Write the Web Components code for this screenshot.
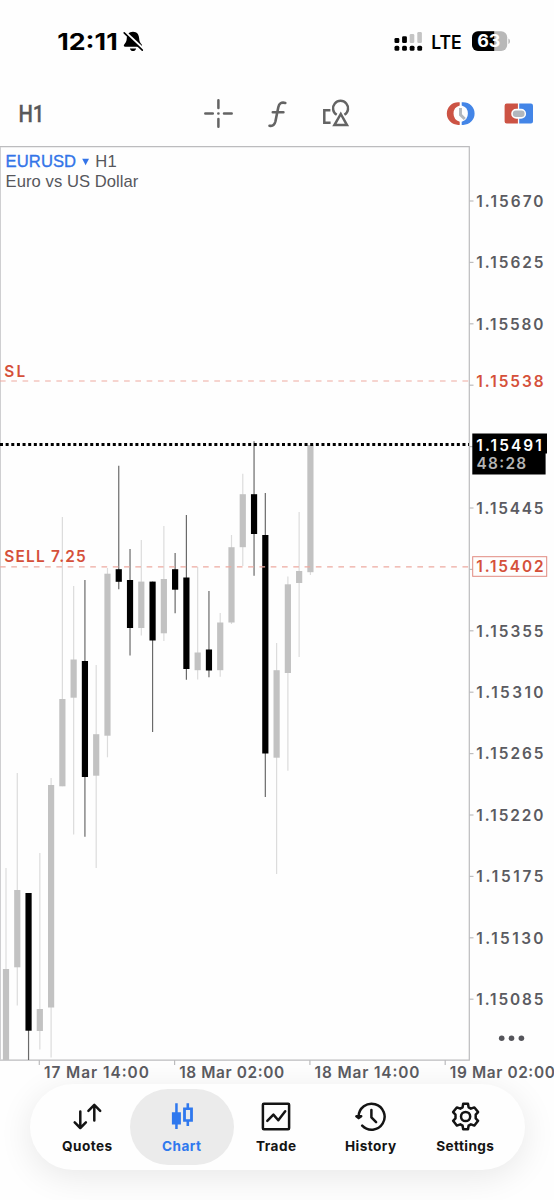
<!DOCTYPE html>
<html lang="en">
<head>
<meta charset="utf-8">
<title>EURUSD H1</title>
<style>
html, body {
    margin: 0;
    background: #fefefe;
}
body {
    width: 554px;
    height: 1200px;
    overflow: hidden;
    display: flex;
    flex-direction: column;
    font-family: Inter, "Liberation Sans", sans-serif;
}
</style>
</head>
<body>
<status-bar></status-bar>
<chart-toolbar></chart-toolbar>
<price-chart></price-chart>
<tab-bar>
    <tab-item label="Quotes">
        <svg width="30" height="30" viewBox="0 0 30 30" fill="none" stroke="#141414" stroke-width="2.5" stroke-linecap="round" stroke-linejoin="round"><path d="M8.3 9.5V25.6M2.7 20.3L8.3 26L13.9 20.3M22.3 18.6V3M16.4 8.8L22.3 2.8L28.2 8.8"/></svg>
    </tab-item>
    <tab-item label="Chart" active>
        <svg width="30" height="30" viewBox="0 0 30 30" fill="#2f78ee"><path d="M8.2 1.3h2.5v8.9h3.2v12.4h-3.2v4.4h-2.5v-4.4h-3.3v-12.4h3.3z"/><path fill-rule="evenodd" d="M19.5 1.3h2.6v4.1h3.8v14.4h-3.8v4.3h-2.6v-4.3h-3.4v-14.4h3.4zM18.9 8.1v9.2h4.2v-9.2z"/></svg>
    </tab-item>
    <tab-item label="Trade">
        <svg width="30" height="30" viewBox="0 0 30 30" fill="none" stroke="#141414" stroke-width="2.5" stroke-linejoin="round"><rect x="1.9" y="1.7" width="26.2" height="25.6" rx="1"/><path stroke-linecap="round" d="M6.3 18.8L12.4 12.6L17.3 18.3L24.2 9.2"/></svg>
    </tab-item>
    <tab-item label="History">
        <svg width="32" height="30" viewBox="0 0 32 30" fill="none" stroke="#141414" stroke-width="2.5" stroke-linecap="round" stroke-linejoin="round"><path d="M3.6 14.6A13 13 0 1 1 7.2 23.7"/><path d="M16.4 8V15.3L21.1 20.2"/><path d="M1.4 14.2H6.2L3.7 16.1z" fill="#141414"/></svg>
    </tab-item>
    <tab-item label="Settings">
        <svg width="30" height="30" viewBox="0 0 30 30" fill="none" stroke="#141414" stroke-width="2.5" stroke-linejoin="round"><path d="M13.2 1.8H18L18.6 5.4L20.9 6.7L24.4 5.4L28.1 10.1L25.7 12.7V16.3L28.1 18.8L24.4 23.6L20.9 22.3L18.6 23.6L18 27.2H13.2L12.6 23.6L10.3 22.3L6.8 23.6L3.1 18.8L5.5 16.3V12.7L3.1 10.1L6.8 5.4L10.3 6.7L12.6 5.4z"/><circle cx="15.6" cy="14.5" r="4.6"/></svg>
    </tab-item>
</tab-bar>
<script>
class BaseElement extends HTMLElement {
    connectedCallback() {
        if (!this.shadowRoot) {
            this.attachShadow({ mode: "open" });
        }
        this.shadowRoot.innerHTML = `<style>${this.css()}</style>${this.content()}`;
    }
    css() {
        return ":host { display: block; }";
    }
    content() {
        return "<slot></slot>";
    }
}

customElements.define("status-bar", class extends BaseElement {
    css() {
        return `
            :host {
                display: flex;
                justify-content: space-between;
                box-sizing: border-box;
                flex: none;
                height: 83px;
                padding: 27px 43px 0 57px;
            }
            div { display: flex; }
            svg { display: block; overflow: visible; }
        `;
    }
    content() {
        return `
            <div>
                <svg width="88" height="30" viewBox="57 27 88 30">
                    <text x="57.2" y="50" font-size="23" font-weight="700" textLength="60.5" lengthAdjust="spacingAndGlyphs">12:11</text>
                    <path d="M133 31.7C129 31.7 127 34.6 126.8 38C126.6 42 125.5 42.8 124.2 44.6C123.4 45.8 123.9 46.8 125.2 46.8H140.6C142 46.8 142.4 45.6 141.7 44.6C140.2 42.8 139.4 41.8 139.1 38C138.9 34.6 137 31.7 133 31.7zM129.9 48.5C130.5 50.3 131.5 51.1 133 51.1S135.6 50.3 136.1 48.5z"/>
                    <path d="M125 31.9L143.6 49.3" stroke="#fefefe" stroke-width="2.6"/>
                    <path d="M124.2 32.8L142.3 50.2" stroke="#000" stroke-width="1.6" stroke-linecap="round"/>
                </svg>
            </div>
            <div>
                <svg width="117" height="30" viewBox="394 27 117 30">
                    <g fill="#c4c4c4"><rect x="409.7" y="34" width="4.6" height="9" rx="1.3"/><rect x="417.3" y="32" width="4.6" height="11" rx="1.3"/></g>
                    <rect x="394.5" y="38" width="4.8" height="5" rx="1.3"/>
                    <rect x="402.1" y="36.3" width="4.8" height="6.8" rx="1.3"/>
                    <rect x="394.5" y="45.8" width="4.8" height="5" rx="1.5"/>
                    <rect x="402.1" y="45.8" width="4.8" height="5" rx="1.5"/>
                    <rect x="409.7" y="45.8" width="4.8" height="5" rx="1.5"/>
                    <rect x="417.3" y="45.8" width="4.8" height="5" rx="1.5"/>
                    <text x="431.2" y="48.5" font-size="18.5" font-weight="600" textLength="30.5" lengthAdjust="spacingAndGlyphs">LTE</text>
                    <rect x="472" y="31.3" width="35.2" height="19.8" rx="6" fill="#b8b8b8"/>
                    <path d="M478 31.3H494.2V51.1H478A6 6 0 0 1 472 45.1V37.3A6 6 0 0 1 478 31.3z"/>
                    <path d="M508.4 38.5C510.5 39.3 510.5 43.2 508.4 44z" fill="#b8b8b8"/>
                    <text x="477.2" y="47.4" font-size="17.4" font-weight="700" fill="#fff" textLength="23.2" lengthAdjust="spacingAndGlyphs">63</text>
                </svg>
            </div>
        `;
    }
});

customElements.define("chart-toolbar", class extends BaseElement {
    css() {
        return `
            :host {
                display: flex;
                align-items: center;
                box-sizing: border-box;
                flex: none;
                height: 63px;
                padding: 0 20px 3px 19px;
            }
            div { display: flex; }
            .tools { gap: 29px; margin-left: 158px; }
            .modes { gap: 27px; margin-left: auto; }
            svg { display: block; overflow: visible; }
        `;
    }
    content() {
        return `
            <svg width="26" height="30" viewBox="0 0 26 30">
                <text x="-0.6" y="23.5" font-family="Roboto, sans-serif" font-size="24.4" font-weight="500" fill="#58585a" stroke="#58585a" stroke-width="0.3" textLength="26" lengthAdjust="spacingAndGlyphs">H1</text>
            </svg>
            <div class="tools">
                <svg width="30" height="30" viewBox="0 0 30 30" fill="none" stroke="#646464" stroke-width="2.5" stroke-linecap="round">
                    <path d="M15.4 2.2V10M15.4 21V28.8M2.3 15.5H9.8M21 15.5H28.7M15.3 15.5H15.5"/>
                </svg>
                <svg width="30" height="30" viewBox="0 0 30 30" fill="none" stroke="#646464" stroke-width="2.6" stroke-linecap="round" stroke-linejoin="round">
                    <path d="M7.5 27.7C11 28.4 12.6 26.6 13.4 23.5L16.3 9.2C17.1 5.3 19.2 4 23.3 4.9M10.8 14.2H21.4"/>
                </svg>
                <svg width="30" height="30" viewBox="0 0 30 30" fill="none" stroke="#646464" stroke-width="2.5">
                    <path d="M9.4 12.3H3.3V24.7H9.6M15.7 16.8A7.5 7.5 0 1 1 23.4 16.8"/>
                    <path d="M19.8 16L26 27.1H13.4z"/>
                </svg>
            </div>
            <div class="modes">
                <svg width="31" height="30" viewBox="0 0 31 30" fill="none">
                    <path d="M13.7 4.3H12.2A11.4 11.3 0 0 0 12.2 26.9H13.7V23.7A8.4 8.4 0 0 1 13.7 7.5z" fill="#cc5344"/>
                    <path d="M15.7 4.3H17.2A11.4 11.3 0 0 1 17.2 26.9H15.7V23.7A8.4 8.4 0 0 0 15.7 7.5z" fill="#4385e7"/>
                    <path d="M14.5 10V16.8L18.8 21" stroke="#b2b7bd" stroke-width="2.9"/>
                </svg>
                <svg width="30" height="30" viewBox="0 0 30 30">
                    <path d="M2.7 5.6H13.9V10.7H12.2A5 5 0 0 0 12.2 20.7H13.9V25.6H2.7Q0.6 25.6 0.6 23.5V7.7Q0.6 5.6 2.7 5.6z" fill="#cc5344"/>
                    <path d="M15.2 5.6H26.9Q29 5.6 29 7.7V23.5Q29 25.6 26.9 25.6H15.2V20.7H17.1A5 5 0 0 0 17.1 10.7H15.2z" fill="#4385e7"/>
                    <rect x="8.8" y="12.5" width="11.8" height="6.4" rx="3.2" fill="#b2b7bd"/>
                </svg>
            </div>
        `;
    }
});

// [high, body top, body bottom, low, bearish]
const candles = [
    [868, 969, 1060, 1060, 0],
    [773, 890, 967.3, 1005.5, 0],
    [893, 893, 1030.7, 1060, 1],
    [853, 1009, 1031, 1049.5, 0],
    [778, 785, 1007.5, 1057.5, 0],
    [517, 699, 786.3, 786.3, 0],
    [586, 659.5, 697.7, 834.5, 0],
    [580, 661, 777, 836.7, 1],
    [665, 734.2, 775.7, 868, 0],
    [568, 573.7, 735.7, 757.3, 0],
    [465.7, 569.2, 581.8, 589.3, 1],
    [549, 580, 628, 655.5, 1],
    [540, 581.6, 628, 635.5, 0],
    [581.6, 581.6, 640.5, 732, 1],
    [526, 579, 633.3, 641, 0],
    [553, 569.2, 589.7, 613.2, 1],
    [515, 577.5, 669, 679.7, 1],
    [567, 652.5, 670.2, 679.5, 0],
    [591, 649.5, 670.5, 677.3, 1],
    [613, 622.5, 670.2, 676.7, 0],
    [535, 547.2, 622.5, 624, 0],
    [473.7, 494.2, 547.2, 566, 0],
    [441.3, 494.2, 534, 575.7, 1],
    [493, 535, 753.5, 797, 1],
    [643, 670.2, 757.7, 874, 0],
    [576.5, 584.3, 673, 770.7, 0],
    [512, 571, 583, 657, 0],
    [445, 445, 572.2, 575, 0]
];
const prices = [
    ["1.15670", 201], ["1.15625", 262.4], ["1.15580", 323.8], ["1.15445", 508],
    ["1.15355", 630.8], ["1.15310", 692.2], ["1.15265", 753.6], ["1.15220", 815],
    ["1.15175", 876.4], ["1.15130", 937.8], ["1.15085", 999.2]
];
const times = [
    ["17 Mar 14:00", 39.3], ["18 Mar 02:00", 174.6],
    ["18 Mar 14:00", 309.9], ["19 Mar 02:00", 445.2]
];

customElements.define("price-chart", class extends BaseElement {
    css() {
        return `
            :host { display: block; flex: none; height: 938px; }
            svg { display: block; }
            .frame, .tick { stroke: #bcbcbe; stroke-width: 1.2; fill: none; }
            .label { font-size: 15.4px; font-weight: 600; fill: #5b5b61; }
            .red { fill: #d5503a; }
            .pair { font: 16.6px "Liberation Sans", sans-serif; fill: #56575c; }
            .link { fill: #3374e8; stroke: #3374e8; stroke-width: 0.35px; }
        `;
    }
    candle([high, top, bottom, low, bearish], index) {
        let x = 6 + index * 11.275;
        let wick = bearish ? "#6a6a6a" : "#dcdcdc";
        return `
            <path d="M${x} ${high}V${low}" stroke="${wick}" stroke-width="1.2"/>
            <rect x="${x - 3.1}" y="${top}" width="6.2" height="${bottom - top}" fill="${bearish ? "#000" : "#c2c2c2"}"/>
        `;
    }
    price(text, y, name = "") {
        return `<text class="label ${name}" x="476.3" y="${y + 5.8}" textLength="67.2">${text}</text>`;
    }
    content() {
        let ticks = "";
        for (let i = 0; i < 14; i++) {
            ticks += `<path class="tick" d="M469 ${201 + i * 61.4}H473.5"/>`;
        }
        return `
            <svg width="554" height="938" viewBox="0 146 554 938">
                <path class="frame" d="M0 146.6H469.3V1060M0 1060.2H469.9"/>
                <path d="M0.5 147V1060" stroke="#cfcfd1"/>
                ${ticks}
                ${candles.map(this.candle).join("")}
                <path d="M0 381H469M0 566.8H469" stroke="#eda9a0" stroke-width="1.2" stroke-dasharray="5.64 5.64"/>
                <path d="M0 444.5H469" stroke="#000" stroke-width="2.8" stroke-dasharray="3 2.64"/>
                <text class="pair link" x="5.6" y="166.6" textLength="70.5">EURUSD</text>
                <path d="M82.2 158.7H89L85.6 165.2z" fill="#3374e8"/>
                <text class="pair" x="95.2" y="166.6" textLength="21.5">H1</text>
                <text class="pair" x="5.6" y="187.4" textLength="132.8">Euro vs US Dollar</text>
                <text class="label red" x="4.3" y="376.8" textLength="21">SL</text>
                <text class="label red" x="4.3" y="562.4" textLength="81.5">SELL 7.25</text>
                ${prices.map(([text, y]) => this.price(text, y)).join("")}
                ${this.price("1.15538", 381, "red")}
                <path d="M472.3 433.6H547V453.6H545.6V474.5H472.3z"/>
                <text class="label" x="476.3" y="450.6" textLength="65.5" style="fill: #fff">1.15491</text>
                <text class="label" x="476.6" y="469" textLength="49.5" style="fill: #b4b4b4">48:28</text>
                <rect x="472.7" y="556.7" width="74" height="19.6" fill="#fefefe" stroke="#e18a80"/>
                ${this.price("1.15402", 566.6, "red")}
                <g fill="#55555b"><circle cx="501.7" cy="1038.2" r="2.8"/><circle cx="511.5" cy="1038.2" r="2.8"/><circle cx="521.4" cy="1038.2" r="2.8"/></g>
                ${times.map(([text, x]) => `
                    <path class="tick" d="M${x} 1060V1065"/>
                    <text class="label" x="${x + 4.6}" y="1077.8" textLength="105">${text}</text>
                `).join("")}
            </svg>
        `;
    }
});

customElements.define("tab-bar", class extends BaseElement {
    css() {
        return `
            :host {
                display: flex;
                box-sizing: border-box;
                flex: none;
                width: 495px;
                height: 86px;
                margin-left: 29.5px;
                padding: 5px 6px 5.5px 5.5px;
                border-radius: 43px;
                background: #fefefe;
                box-shadow: 0 7px 34px rgba(0, 0, 0, 0.09);
            }
        `;
    }
});

customElements.define("tab-item", class extends BaseElement {
    css() {
        return `
            :host {
                display: flex;
                flex-direction: column;
                align-items: center;
                box-sizing: border-box;
                flex: none;
                width: 104.5px;
                margin-right: -10px;
                padding-top: 13px;
                border-radius: 38px;
                color: #141414;
            }
            :host([active]) {
                background: #ebebeb;
                color: #2f78ee;
            }
            ::slotted(svg) { display: block; }
            span {
                margin-top: 5.4px;
                font-size: 13.6px;
                line-height: 18px;
                font-weight: 700;
                letter-spacing: 0.42px;
            }
        `;
    }
    content() {
        return `<slot></slot><span>${this.getAttribute("label")}</span>`;
    }
});
</script>
</body>
</html>
